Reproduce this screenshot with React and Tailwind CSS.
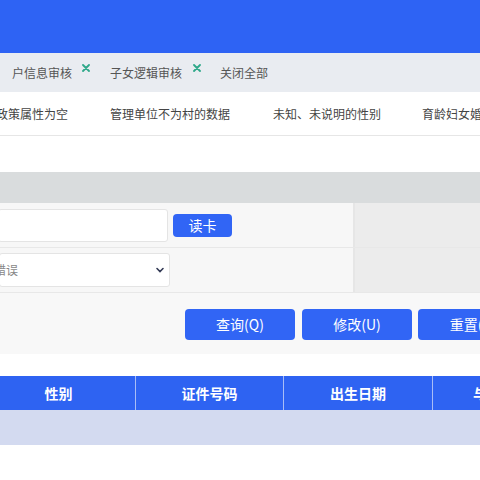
import React from "react";

function XIcon() {
  return (
    <svg width="8" height="8" viewBox="0 0 8 8" className="mb-[10px]">
      <path d="M1 1 L7 7 M7 1 L1 7" stroke="#2fa88a" strokeWidth="1.8" strokeLinecap="round" />
    </svg>
  );
}

export default function App() {
  return (
    <div className="w-[480px] h-[480px] overflow-hidden bg-white font-['Noto_Sans_CJK_SC','Noto_Sans',sans-serif]">
      {/* header */}
      <div className="h-[53px] bg-[#2e63f4]" />
      {/* tabs */}
      <div className="h-[39px] bg-[#e9ecf1] flex items-center text-[12px] text-[#555]">
        <span className="ml-[12px]">户信息审核</span>
        <span className="ml-[10px]"><XIcon /></span>
        <span className="ml-[20px]">子女逻辑审核</span>
        <span className="ml-[11px]"><XIcon /></span>
        <span className="ml-[19px]">关闭全部</span>
      </div>
      {/* sub tabs */}
      <div className="h-[44px] border-b border-[#e6e6e6] flex items-center text-[12px] text-[#444] whitespace-nowrap">
        <span className="ml-[-4px]">政策属性为空</span>
        <span className="ml-[42px]">管理单位不为村的数据</span>
        <span className="ml-[43px]">未知、未说明的性别</span>
        <span className="ml-[41px]">育龄妇女婚姻状况</span>
      </div>
      <div className="h-[36px]" />
      {/* gray band */}
      <div className="h-[31px] bg-[#d9dcdd]" />
      {/* form */}
      <div className="bg-[#f7f7f7]">
        <div className="flex h-[45px] border-b border-[#e8e8e8]">
          <div className="w-[355px] flex items-center border-r-2 border-[#e6e6e6]">
            <div className="w-[170px] h-[33px] bg-white border border-[#e4e4e4] rounded-[3px] ml-[-2px]" />
            <button className="ml-[5px] w-[59px] h-[23px] rounded-[4px] bg-[#3165f5] text-white text-[14px] leading-[23px]">读卡</button>
          </div>
          <div className="flex-1 bg-[#ececec]" />
        </div>
        <div className="flex h-[45px] border-b border-[#e8e8e8]">
          <div className="w-[355px] flex items-center border-r-2 border-[#e6e6e6]">
            <div className="w-[171px] h-[34px] bg-white border border-[#e4e4e4] rounded-[3px] ml-[-1px] flex items-center justify-between pr-[4px]">
              <span className="text-[12px] text-[#888] ml-[-6px]">错误</span>
              <svg width="10" height="10" viewBox="0 0 10 10">
                <path d="M2 3.5 L5 6.5 L8 3.5" stroke="#333a55" strokeWidth="1.6" fill="none" strokeLinecap="round" />
              </svg>
            </div>
          </div>
          <div className="flex-1 bg-[#ececec]" />
        </div>
        <div className="h-[61px] bg-[#f8f8f8] flex items-start pt-[16px] gap-[7px] pl-[185px]">
          <button className="w-[110px] h-[31px] shrink-0 rounded-[4px] bg-[#3165f5] text-white text-[14px]">查询(Q)</button>
          <button className="w-[110px] h-[31px] shrink-0 rounded-[4px] bg-[#3165f5] text-white text-[14px]">修改(U)</button>
          <button className="w-[110px] h-[31px] shrink-0 rounded-[4px] bg-[#3165f5] text-white text-[14px] ml-[-1px]">重置(R)</button>
        </div>
      </div>
      <div className="h-[22px] bg-white" />
      {/* table */}
      <div className="ml-[-18px] w-[700px]">
        <div className="flex h-[34px] bg-[#2e63f2] text-white text-[14px] font-bold">
          <div className="w-[154px] flex items-center justify-center border-r border-[#a9bdf6]">性别</div>
          <div className="w-[148px] flex items-center justify-center border-r border-[#a9bdf6]">证件号码</div>
          <div className="w-[149px] flex items-center justify-center border-r border-[#a9bdf6]">出生日期</div>
          <div className="w-[150px] flex items-center justify-center">与户主关系</div>
        </div>
        <div className="h-[35px] bg-[#d3daf0]" />
      </div>
    </div>
  );
}
